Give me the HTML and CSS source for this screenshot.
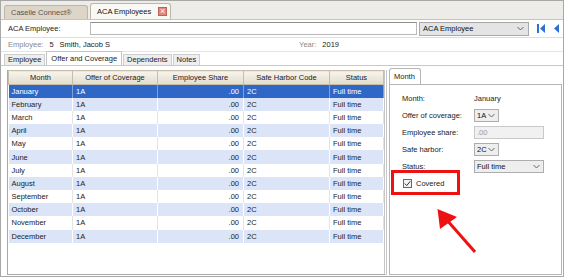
FILE: index.html
```html
<!doctype html>
<html>
<head>
<meta charset="utf-8">
<title>ACA Employees</title>
<link rel="stylesheet" href="styles.css">
</head>
<body>
<div class="win">
	<div class="doc-tabs">
		<div class="dtab">Caselle Connect®</div>
		<div class="dtab on">ACA Employees <span class="close">×</span></div>
	</div>
	<div class="lookup">
		<span class="lk-label">ACA Employee:</span>
		<div class="lk-input"></div>
		<div class="combo">ACA Employee
			<svg class="chev" width="7" height="5" viewBox="0 0 7 5"><path d="M0.5 1 L3.5 4 L6.5 1" fill="none" stroke="#666" stroke-width="1"/></svg>
		</div>
		<div class="nav">
			<svg width="8" height="9" viewBox="0 0 8 9"><rect x="0" y="0" width="2" height="9" fill="#2f6fd0"/><path d="M8 0 L3 4.5 L8 9 Z" fill="#2f6fd0"/></svg>
			<svg width="5" height="9" viewBox="0 0 5 9"><path d="M5 0 L0 4.5 L5 9 Z" fill="#2f6fd0"/></svg>
		</div>
	</div>
	<div class="info">
		<span class="key">Employee:</span><span class="emp-no">5</span><span>Smith, Jacob S</span>
		<span class="key year">Year:</span><span>2019</span>
	</div>
	<div class="sub-tabs">
		<div class="stab">Employee</div>
		<div class="stab on">Offer and Coverage</div>
		<div class="stab">Dependents</div>
		<div class="stab">Notes</div>
	</div>
	<div class="main">
		<div class="grid">
			<table>
				<thead>
					<tr><th class="c1">Month</th><th class="c2">Offer of Coverage</th><th class="c3">Employee Share</th><th class="c4">Safe Harbor Code</th><th class="c5">Status</th></tr>
				</thead>
				<tbody>
					<tr class="sel"><td>January</td><td>1A</td><td class="num">.00</td><td>2C</td><td>Full time</td></tr>
					<tr><td>February</td><td>1A</td><td class="num">.00</td><td>2C</td><td>Full time</td></tr>
					<tr><td>March</td><td>1A</td><td class="num">.00</td><td>2C</td><td>Full time</td></tr>
					<tr><td>April</td><td>1A</td><td class="num">.00</td><td>2C</td><td>Full time</td></tr>
					<tr><td>May</td><td>1A</td><td class="num">.00</td><td>2C</td><td>Full time</td></tr>
					<tr><td>June</td><td>1A</td><td class="num">.00</td><td>2C</td><td>Full time</td></tr>
					<tr><td>July</td><td>1A</td><td class="num">.00</td><td>2C</td><td>Full time</td></tr>
					<tr><td>August</td><td>1A</td><td class="num">.00</td><td>2C</td><td>Full time</td></tr>
					<tr><td>September</td><td>1A</td><td class="num">.00</td><td>2C</td><td>Full time</td></tr>
					<tr><td>October</td><td>1A</td><td class="num">.00</td><td>2C</td><td>Full time</td></tr>
					<tr><td>November</td><td>1A</td><td class="num">.00</td><td>2C</td><td>Full time</td></tr>
					<tr><td>December</td><td>1A</td><td class="num">.00</td><td>2C</td><td>Full time</td></tr>
				</tbody>
			</table>
		</div>
		<div class="side">
			<div class="side-tabs"><div class="side-tab">Month</div></div>
			<div class="side-panel">
				<div class="row"><span class="lbl">Month:</span><span>January</span></div>
				<div class="row"><span class="lbl">Offer of coverage:</span><div class="sel-box short">1A<svg class="chev" width="7" height="5" viewBox="0 0 7 5"><path d="M0.5 1 L3.5 4 L6.5 1" fill="none" stroke="#666" stroke-width="1"/></svg></div></div>
				<div class="row"><span class="lbl">Employee share:</span><div class="ro-input">.00</div></div>
				<div class="row"><span class="lbl">Safe harbor:</span><div class="sel-box short">2C<svg class="chev" width="7" height="5" viewBox="0 0 7 5"><path d="M0.5 1 L3.5 4 L6.5 1" fill="none" stroke="#666" stroke-width="1"/></svg></div></div>
				<div class="row"><span class="lbl">Status:</span><div class="sel-box wide">Full time<svg class="chev" width="7" height="5" viewBox="0 0 7 5"><path d="M0.5 1 L3.5 4 L6.5 1" fill="none" stroke="#666" stroke-width="1"/></svg></div></div>
				<div class="row check-row"><span class="cb"><svg width="7" height="7" viewBox="0 0 7 7"><path d="M0.8 3.6 L2.7 5.6 L6.3 1.2" fill="none" stroke="#333" stroke-width="1"/></svg></span><span>Covered</span></div>
			</div>
		</div>
	</div>
	<!-- annotation -->
	<div class="mark"></div>
	<svg class="arrow" width="564" height="277" viewBox="0 0 564 277">
		<line x1="475" y1="252" x2="446" y2="219" stroke="#ee1111" stroke-width="3"/>
		<path d="M437.5 209 L440 229 L457 217 Z" fill="#ee1111"/>
	</svg>
</div>
</body>
</html>
```

FILE: styles.css
```css
*{margin:0;padding:0;box-sizing:border-box}
body{width:564px;height:277px;overflow:hidden;font-family:"Liberation Sans",Arial,sans-serif;font-size:7.5px;color:#222;background:#fff}
.win{position:relative;width:564px;height:277px;border:1px solid #a8a8a8;display:flex;flex-direction:column;background:#fff}

/* document tabs */
.doc-tabs{height:19px;background:#eeece8;border-bottom:1px solid #c9c4ba;display:flex;align-items:flex-end;padding-left:3px;gap:2px}
.dtab{height:14px;line-height:13px;padding:0 6px;border:1px solid #bdb5a5;border-bottom:0;border-radius:3px 3px 0 0;background:#ddd6c8;color:#555;width:84px;white-space:nowrap}
.dtab.on{height:16px;line-height:15px;background:#f9f8f5;color:#111;width:auto;display:flex;align-items:center;gap:7px;padding:0 3px 0 6px}
.close{flex:none;display:inline-block;width:9px;height:9px;line-height:7px;text-align:center;font-size:9px;color:#fff;background:#e3877a;border:1px solid #c0605a}

/* lookup row */
.lookup{height:18px;display:flex;align-items:center;padding-left:7px;border-bottom:1px solid #dedede}
.lk-label{width:82px}
.lk-input{width:327px;height:13px;border:1px solid #b9b9b9;border-top-color:#8f8f8f}
.combo{width:110px;height:14px;margin-left:2px;border:1px solid #a9a9a9;background:#e4e4e4;display:flex;align-items:center;justify-content:space-between;padding:0 4px 0 3px;color:#111}
.nav{display:flex;align-items:center;gap:9px;margin-left:8px}

/* info */
.info{height:14px;display:flex;align-items:center;padding-left:7px;border-bottom:1px solid #e4e4e4}
.key{color:#8a8a8a;margin-right:6px}
.emp-no{margin-right:6px}
.year{margin-left:189px}

/* sub tabs */
.sub-tabs{height:14px;display:flex;align-items:flex-end;padding-left:3px;border-bottom:1px solid #c8c8c8}
.stab{height:11px;line-height:10px;padding:0 3px;border:1px solid #cfcfcf;border-bottom:0;background:#eeeeee;color:#222;margin-right:1px}
.stab.on{height:14px;line-height:13px;background:#fff;border-color:#c4c4c4;padding:0 4px}

/* main area */
.main{flex:1;display:flex;padding:4px 0 1px 6px;gap:2px;min-height:0}
.grid{width:380px;border:1px solid #a9a9a9;border-top:0;border-right:3px double #c6c6c6;background:#fff}
table{border-collapse:collapse;width:375px;table-layout:fixed}
th{height:14px;font-weight:normal;text-align:center;background:linear-gradient(#f7f4ee,#e3dccc);border:1px solid #c7bea9;border-left:0;color:#222}
th.c1{border-left:1px solid #c7bea9;border-radius:3px 0 0 0;width:64px}
th.c2{width:85px}
th.c3{width:86px}
th.c4{width:86px}
th.c5{width:54px;border-radius:0 3px 0 0}
td{height:13.2px;padding:0 3px;border-right:1px solid #e4e4e4;white-space:nowrap;overflow:hidden}
td.num{text-align:right;padding-right:4px}
tbody tr:nth-child(even){background:#dbe5f7}
tbody tr:nth-child(even) td{border-right-color:#fff}
tbody tr.sel{background:#2f67c6;color:#fff}
tbody tr.sel td{border-right-color:#7f9fdc}

/* side panel */
.side{flex:1;display:flex;flex-direction:column;margin-top:-2px;margin-right:1px}
.side-tabs{height:16px;display:flex;align-items:flex-end}
.side-tab{height:16px;line-height:15px;width:32px;padding-left:4px;border:1px solid #b5b5b5;border-bottom:0;border-radius:3px 3px 0 0;background:#fff}
.side-panel{flex:1;border:1px solid #b5b5b5;padding:5px 0 0 12px}
.row{height:17px;display:flex;align-items:center}
.lbl{width:72px}
.sel-box{height:13px;border:1px solid #adadad;background:#eeeeee;display:flex;align-items:center;justify-content:space-between;padding:0 3px 0 2px;color:#111}
.sel-box.short{width:25px}
.sel-box.wide{width:70px}
.ro-input{width:70px;height:13px;border:1px solid #c9c9c9;background:#f1f1f1;color:#9a9a9a;padding-left:2px;line-height:11px}
.check-row{margin-left:1px}
.cb{width:9px;height:9px;border:1px solid #666;background:#f3f3f3;display:flex;align-items:center;justify-content:center;margin-right:4px}

/* annotation */
.mark{position:absolute;left:390px;top:169px;width:69px;height:25px;border:3px solid #ee1111}
.arrow{position:absolute;left:-1px;top:-1px;pointer-events:none}
```
